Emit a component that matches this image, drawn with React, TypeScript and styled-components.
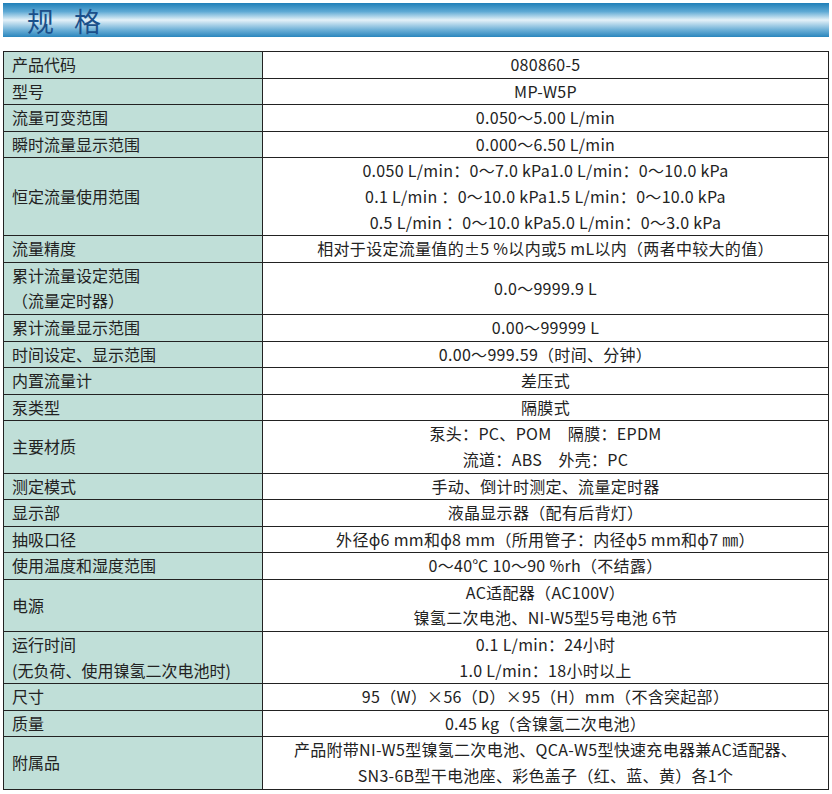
import React from 'react'
import styled, { createGlobalStyle } from 'styled-components'

const Global = createGlobalStyle`
  body { margin: 0; background: #fff; font-family: "Noto Sans CJK SC", "Noto Sans", sans-serif; color: #222; }
`

const Page = styled.div`
  padding: 3px 3px 0 3px;
  display: flex;
  flex-direction: column;
  gap: 14px;
`

const Banner = styled.div`
  height: 34px;
  display: flex;
  align-items: center;
  padding-left: 24px;
  background: linear-gradient(180deg, #1f7fb8 0%, #5ea9d4 25%, #e4f1f8 50%, #6aaed6 80%, #2a86bd 100%);
  color: #1b4f8a;
  font-size: 27px;
  letter-spacing: 20px;
`

const Table = styled.table`
  border-collapse: collapse;
  width: 826px;
  font-size: 16px;
`

const Label = styled.td`
  width: 242px;
  background: #c0dfd8;
  border: 1.5px solid #222;
  padding: 0 8px;
  line-height: 25.6px;
  vertical-align: middle;
`

const Value = styled.td`
  border: 1.5px solid #222;
  text-align: center;
  line-height: 25.6px;
  padding: 0 4px;
  letter-spacing: 0.3px;
`

const rows: [string[], string[]][] = [
  [['产品代码'], ['080860-5']],
  [['型号'], ['MP-W5P']],
  [['流量可变范围'], ['0.050～5.00 L/min']],
  [['瞬时流量显示范围'], ['0.000～6.50 L/min']],
  [['恒定流量使用范围'], ['0.050 L/min：0～7.0 kPa1.0 L/min：0～10.0 kPa', '0.1 L/min ：0～10.0 kPa1.5 L/min：0～10.0 kPa', '0.5 L/min ：0～10.0 kPa5.0 L/min：0～3.0 kPa']],
  [['流量精度'], ['相对于设定流量值的±5 %以内或5 mL以内（两者中较大的值）']],
  [['累计流量设定范围', '（流量定时器）'], ['0.0～9999.9 L']],
  [['累计流量显示范围'], ['0.00～99999 L']],
  [['时间设定、显示范围'], ['0.00～999.59（时间、分钟）']],
  [['内置流量计'], ['差压式']],
  [['泵类型'], ['隔膜式']],
  [['主要材质'], ['泵头：PC、POM　隔膜：EPDM', '流道：ABS　外壳：PC']],
  [['测定模式'], ['手动、倒计时测定、流量定时器']],
  [['显示部'], ['液晶显示器（配有后背灯）']],
  [['抽吸口径'], ['外径ϕ6 mm和ϕ8 mm（所用管子：内径ϕ5 mm和ϕ7 ㎜）']],
  [['使用温度和湿度范围'], ['0～40℃ 10～90 %rh（不结露）']],
  [['电源'], ['AC适配器（AC100V）', '镍氢二次电池、NI-W5型5号电池 6节']],
  [['运行时间', '(无负荷、使用镍氢二次电池时)'], ['0.1 L/min：24小时', '1.0 L/min：18小时以上']],
  [['尺寸'], ['95（W）×56（D）×95（H）mm（不含突起部）']],
  [['质量'], ['0.45 kg（含镍氢二次电池）']],
  [['附属品'], ['产品附带NI-W5型镍氢二次电池、QCA-W5型快速充电器兼AC适配器、', 'SN3-6B型干电池座、彩色盖子（红、蓝、黄）各1个']],
]

const Lines = ({ lines }: { lines: string[] }) => (
  <>
    {lines.map((l, i) => (
      <div key={i}>{l}</div>
    ))}
  </>
)

export default function App() {
  return (
    <Page>
      <Global />
      <Banner>规格</Banner>
      <Table>
        <tbody>
          {rows.map(([label, value], i) => (
            <tr key={i}>
              <Label><Lines lines={label} /></Label>
              <Value><Lines lines={value} /></Value>
            </tr>
          ))}
        </tbody>
      </Table>
    </Page>
  )
}
